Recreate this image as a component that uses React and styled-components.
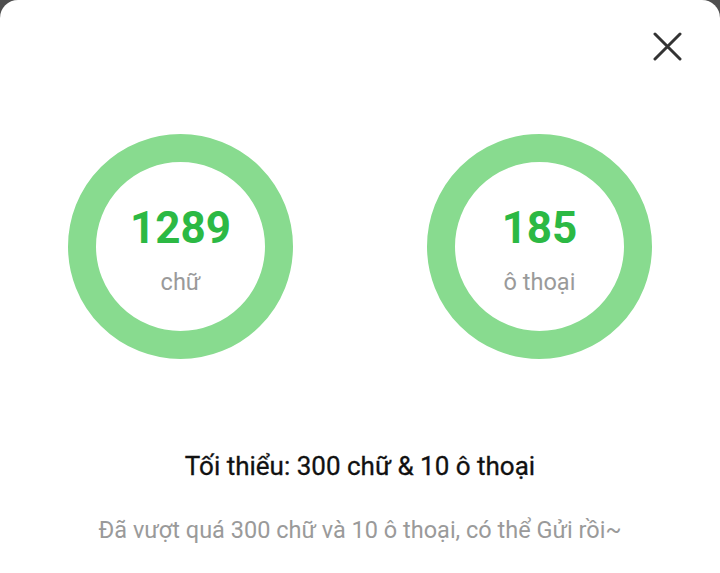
import React from "react";
import styled, { createGlobalStyle } from "styled-components";

const Global = createGlobalStyle`
  html, body { margin: 0; padding: 0; background: #4f4f4f; }
  body { font-family: Roboto, "Noto Sans", sans-serif; }
`;

const Panel = styled.div`
  width: 720px;
  height: 573px;
  background: #fff;
  border-radius: 18px 18px 0 0;
  display: flex;
  flex-direction: column;
  align-items: center;
  box-sizing: border-box;
  overflow: hidden;
`;

const Header = styled.div`
  align-self: stretch;
  display: flex;
  justify-content: flex-end;
  padding: 32px 38px 0 0;
`;

const CloseButton = styled.button`
  width: 29px;
  height: 29px;
  padding: 0;
  border: none;
  background: none;
  display: flex;
  align-items: center;
  justify-content: center;
  cursor: pointer;
`;

const Rings = styled.div`
  display: flex;
  gap: 134px;
  margin-top: 73px;
`;

const Ring = styled.div`
  width: 225px;
  height: 225px;
  box-sizing: border-box;
  border: 28px solid #88db8f;
  border-radius: 50%;
  display: flex;
  flex-direction: column;
  align-items: center;
  justify-content: center;
`;

const Count = styled.div`
  font-size: 44px;
  font-weight: 700;
  color: #2cb944;
  line-height: 52px;
  margin-top: 5px;
`;

const Unit = styled.div`
  font-size: 23.5px;
  color: #9a9a9a;
  line-height: 28px;
  margin-top: 14px;
`;

const Title = styled.div`
  margin-top: 92px;
  font-size: 26px;
  font-weight: 400;
  color: #111;
  line-height: 30px;
  -webkit-text-stroke: 0.3px #111;
`;

const Note = styled.div`
  margin-top: 34px;
  font-size: 23.5px;
  color: #9a9a9a;
  line-height: 30px;
`;

const stats = [
  { value: "1289", unit: "chữ" },
  { value: "185", unit: "ô thoại" },
];

export default function App() {
  return (
    <>
      <Global />
      <Panel>
        <Header>
          <CloseButton aria-label="close">
            <svg width="29" height="29" viewBox="0 0 29 29">
              <path d="M2 2 L27 27 M27 2 L2 27" stroke="#333" strokeWidth="3" strokeLinecap="round" />
            </svg>
          </CloseButton>
        </Header>
        <Rings>
          {stats.map((s) => (
            <Ring key={s.unit}>
              <Count>{s.value}</Count>
              <Unit>{s.unit}</Unit>
            </Ring>
          ))}
        </Rings>
        <Title>Tối thiểu: 300 chữ &amp; 10 ô thoại</Title>
        <Note>Đã vượt quá 300 chữ và 10 ô thoại, có thể Gửi rồi~</Note>
      </Panel>
    </>
  );
}
